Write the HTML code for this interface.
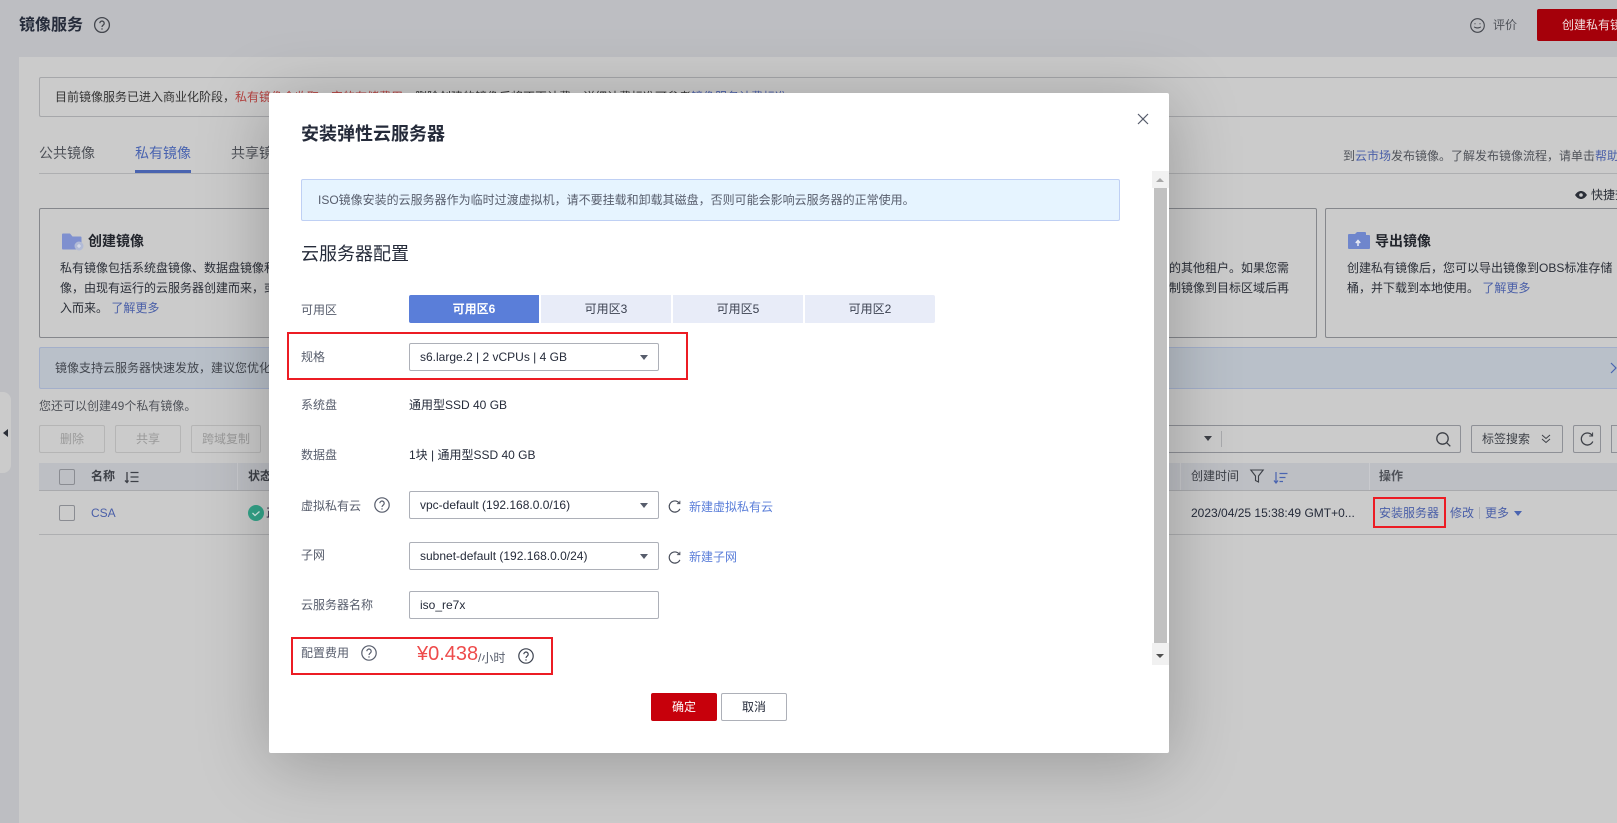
<!DOCTYPE html>
<html lang="zh">
<head>
<meta charset="utf-8">
<title>镜像服务</title>
<style>
html,body{margin:0;padding:0;width:1617px;height:823px;overflow:hidden;background:#bdbec2;}
body{position:relative;font-family:"Liberation Sans","Noto Sans CJK SC",sans-serif;font-size:12px;color:#2b2f38;filter:blur(.3px);}
.a{position:absolute;box-sizing:border-box;}
.t{position:absolute;white-space:nowrap;line-height:20px;height:20px;font-size:12px;}
.b{color:#4a5fa8;}
.g{color:#4f5259;}
svg{position:absolute;overflow:visible;}
.l{color:#575d6c;}
.v{color:#252b3a;}
.sel{position:absolute;box-sizing:border-box;left:409px;width:250px;height:28px;border:1px solid #adb0b8;border-radius:2px;background:#fff;}
.sel span{position:absolute;left:10px;top:3px;line-height:20px;white-space:nowrap;color:#252b3a;font-size:12px;}
.sel i{position:absolute;right:10px;top:11px;width:0;height:0;border-left:4px solid transparent;border-right:4px solid transparent;border-top:5px solid #575d6c;}
.az{position:absolute;top:295px;height:28px;width:130px;background:#e8ecf8;text-align:center;line-height:28px;color:#3b4150;font-size:12px;}
.bt{position:absolute;box-sizing:border-box;top:425px;height:28px;border:1px solid #b5b5b5;border-radius:2px;color:#9a9a9a;text-align:center;line-height:26px;}
.cb{position:absolute;box-sizing:border-box;left:59px;width:16px;height:16px;border:1px solid #8a8c92;border-radius:2px;}
.r{position:absolute;box-sizing:border-box;border:2px solid #ec1c24;}
</style>
</head>
<body>

<!-- page background -->
<div class="a" style="left:19px;top:57px;width:1598px;height:766px;background:#cbcbcb;"></div>
<div class="a" style="left:0;top:392px;width:11px;height:81px;background:#cbcbcb;border-radius:0 8px 8px 0;"></div>
<div class="a" style="left:3px;top:429px;width:0;height:0;border-top:4px solid transparent;border-bottom:4px solid transparent;border-right:5px solid #2b2f38;"></div>

<div class="t" style="left:19px;top:16px;font-size:16px;font-weight:bold;color:#252b3a;">镜像服务</div>
<svg style="left:94px;top:17px" width="16" height="16" viewBox="0 0 16 16" fill="none" stroke="#44474e" stroke-width="1.300"><circle cx="8" cy="8" r="7.400"/><path d="M5.800 6.200a2.200 2.200 0 1 1 3.400 1.900c-.8.500-1.200 1-1.200 1.900"/><path d="M8 11.300v1.300"/></svg>

<svg style="left:1470px;top:18px" width="15" height="15" viewBox="0 0 15 15" fill="none" stroke="#44474e" stroke-width="1.100"><circle cx="7.500" cy="7.500" r="6.800"/><path d="M4.300 8.800c.8 1.500 5.600 1.500 6.400 0"/><path d="M5 5.200v1.100M10 5.200v1.100"/></svg>
<div class="t g" style="left:1493px;top:15px;">评价</div>
<div class="a" style="left:1537px;top:9px;width:80px;height:32px;background:#a5000a;border-radius:2px 0 0 2px;overflow:hidden;"><div class="t" style="left:25px;top:6px;color:#f2dede;">创建私有镜像</div></div>

<!-- notice -->
<div class="a" style="left:39px;top:77px;width:1578px;height:40px;border:1px solid #a6a7aa;border-right:0;border-radius:2px 0 0 2px;"></div>
<div class="t" style="left:55px;top:87px;"><span style="color:#333">目前镜像服务已进入商业化阶段，</span><span style="color:#b5413f">私有镜像会收取一定的存储费用，</span><span style="color:#333">删除创建的镜像后将不再计费，详细计费标准可参考</span><span class="b">镜像服务计费标准</span></div>

<!-- tabs -->
<div class="t g" style="left:39px;top:143px;font-size:14px;">公共镜像</div>
<div class="t" style="left:135px;top:143px;font-size:14px;color:#4a64b0;">私有镜像</div>
<div class="t g" style="left:231px;top:143px;font-size:14px;">共享镜像</div>
<div class="a" style="left:39px;top:173px;width:1578px;height:1px;background:#aeafb1;"></div>
<div class="a" style="left:135px;top:170px;width:56px;height:3px;background:#4a64b0;"></div>
<div class="t g" style="left:1343px;top:146px;">到<span class="b">云市场</span>发布镜像。了解发布镜像流程，请单击<span class="b">帮助</span></div>

<svg style="left:1575px;top:191px" width="12" height="8" viewBox="0 0 12 8"><path d="M0 4C2 1 4 0 6 0s4 1 6 4c-2 3-4 4-6 4S2 7 0 4z" fill="#2b2f38"/><circle cx="6" cy="4" r="1.800" fill="#cbcbcb"/></svg>
<div class="t" style="left:1591px;top:185px;">快捷查看</div>

<!-- cards -->
<div class="a" style="left:39px;top:208px;width:1278px;height:130px;border:1px solid #85878c;border-radius:2px;"></div>
<div class="a" style="left:1325px;top:208px;width:292px;height:130px;border:1px solid #85878c;border-right:0;border-radius:2px 0 0 2px;"></div>
<svg style="left:62px;top:233px" width="22" height="18" viewBox="0 0 22 18"><path d="M0 1.500a1 1 0 0 1 1-1h7l2.500 3h8a1 1 0 0 1 1 1v11a1 1 0 0 1-1 1H1a1 1 0 0 1-1-1z" fill="#7f90cf"/><circle cx="17" cy="13" r="4.500" fill="#b2bbd6"/><path d="M17 11v4M15 13h4" stroke="#dfe3ee" stroke-width="1"/></svg>
<div class="t" style="left:88px;top:231px;font-size:14px;font-weight:bold;color:#22252c;">创建镜像</div>
<div class="t" style="left:60px;top:258px;">私有镜像包括系统盘镜像、数据盘镜像和整机镜像</div>
<div class="t" style="left:60px;top:278px;">像，由现有运行的云服务器创建而来，或从外部导</div>
<div class="t" style="left:60px;top:298px;">入而来。 <span class="b">了解更多</span></div>
<div class="t" style="left:1169px;top:258px;">的其他租户。如果您需</div>
<div class="t" style="left:1169px;top:278px;">制镜像到目标区域后再</div>
<svg style="left:1348px;top:232px" width="22" height="19" viewBox="0 0 22 19"><path d="M0 3a1 1 0 0 1 1-1h6l2-2h8a1 1 0 0 1 1 1v2h3a1 1 0 0 1 1 1v12a1 1 0 0 1-1 1H1a1 1 0 0 1-1-1z" fill="#6f86cc"/><path d="M10 14v-5M7.800 11L10 8.500 12.200 11" fill="none" stroke="#e8ebf5" stroke-width="1.500"/></svg>
<div class="t" style="left:1375px;top:231px;font-size:14px;font-weight:bold;color:#22252c;">导出镜像</div>
<div class="t" style="left:1347px;top:258px;">创建私有镜像后，您可以导出镜像到OBS标准存储</div>
<div class="t" style="left:1347px;top:278px;">桶，并下载到本地使用。 <span class="b">了解更多</span></div>

<!-- banner -->
<div class="a" style="left:39px;top:347px;width:1578px;height:42px;background:#b9c0c9;border:1px solid #a3afca;border-right:0;border-radius:2px 0 0 2px;"></div>
<div class="t" style="left:55px;top:358px;color:#41454d;">镜像支持云服务器快速发放，建议您优化镜像</div>
<svg style="left:1610px;top:362px" width="7" height="12" viewBox="0 0 7 12" fill="none" stroke="#4a64b0" stroke-width="1.200"><path d="M1 1l5 5-5 5"/></svg>

<div class="t g" style="left:39px;top:396px;">您还可以创建49个私有镜像。</div>

<div class="bt" style="left:39px;width:66px;">删除</div>
<div class="bt" style="left:115px;width:66px;">共享</div>
<div class="bt" style="left:191px;width:70px;">跨域复制</div>

<div class="a" style="left:1150px;top:425px;width:311px;height:28px;border:1px solid #8e9096;border-left:0;border-radius:0 2px 2px 0;"></div>
<div class="a" style="left:1204px;top:436px;width:0;height:0;border-left:4px solid transparent;border-right:4px solid transparent;border-top:5px solid #3d4047;"></div>
<div class="a" style="left:1221px;top:431px;width:1px;height:16px;background:#a9aaad;"></div>
<svg style="left:1436px;top:432px" width="15" height="15" viewBox="0 0 15 15" fill="none" stroke="#3d4047" stroke-width="1.300"><circle cx="6.500" cy="6.500" r="5.700"/><path d="M10.800 10.800l3.500 3.500"/></svg>
<div class="a" style="left:1471px;top:425px;width:92px;height:28px;border:1px solid #8e9096;border-radius:2px;"></div>
<div class="t" style="left:1482px;top:429px;color:#3d4047;">标签搜索</div>
<svg style="left:1541px;top:434px" width="10" height="10" viewBox="0 0 10 10" fill="none" stroke="#3d4047" stroke-width="1"><path d="M1 1l4 3.500L9 1M1 5l4 3.500L9 5"/></svg>
<div class="a" style="left:1573px;top:425px;width:28px;height:28px;border:1px solid #8e9096;border-radius:2px;"></div>
<svg style="left:1580px;top:432px" width="14" height="14" viewBox="0 0 14 14" fill="none" stroke="#3d4047" stroke-width="1.300"><path d="M12.200 3.500A6 6 0 1 0 12.800 9.500"/><path d="M12.600 .5v3.500H9.200" stroke-width="1"/></svg>
<div class="a" style="left:1611px;top:425px;width:6px;height:28px;border:1px solid #8e9096;border-right:0;"></div>

<!-- table -->
<div class="a" style="left:39px;top:463px;width:1578px;height:27px;background:#bdbfc4;"></div>
<div class="a" style="left:39px;top:490px;width:1578px;height:1px;background:#a9aaad;"></div>
<div class="a" style="left:237px;top:463px;width:1px;height:27px;background:#c9cace;"></div>
<div class="a" style="left:1180px;top:463px;width:1px;height:27px;background:#c9cace;"></div>
<div class="a" style="left:1369px;top:463px;width:1px;height:27px;background:#c9cace;"></div>
<div class="cb" style="top:469px;"></div>
<div class="t" style="left:91px;top:466px;font-weight:bold;color:#3d4047;">名称</div>
<svg style="left:124px;top:471px" width="15" height="13" viewBox="0 0 15 13" fill="none" stroke="#3d4047" stroke-width="1.300"><path d="M3 1v10M1 9.500L3 11.500 4.500 9.500"/><path d="M6.500 1.500h8M6.500 6h8M6.500 10.500h8"/></svg>
<div class="t" style="left:248px;top:466px;font-weight:bold;color:#3d4047;">状态</div>
<div class="t" style="left:1191px;top:466px;color:#3d4047;">创建时间</div>
<svg style="left:1250px;top:469px" width="14" height="14" viewBox="0 0 14 14" fill="none" stroke="#3d4047" stroke-width="1.100"><path d="M.8 1h12.400L8.500 7v6L5.500 11.500V7z"/></svg>
<svg style="left:1273px;top:472px" width="15" height="12" viewBox="0 0 15 12" fill="none" stroke="#4a64b0" stroke-width="1.200"><path d="M3 0v10.500M1 8.500L3 11 5 8.500"/><path d="M6.500 1.500h8M6.500 5.500h6M6.500 9.500h3.500"/></svg>
<div class="t" style="left:1379px;top:466px;font-weight:bold;color:#4f5259;">操作</div>

<div class="cb" style="top:505px;"></div>
<div class="t b" style="left:91px;top:503px;">CSA</div>
<svg style="left:248px;top:505px" width="16" height="16" viewBox="0 0 16 16"><circle cx="8" cy="8" r="8" fill="#34a58a"/><path d="M4.500 8l2.500 2.500 4.500-4" fill="none" stroke="#d5eee8" stroke-width="1.300"/></svg>
<div class="t" style="left:266px;top:503px;color:#2b1a3a;">正常</div>
<div class="t" style="left:1191px;top:503px;color:#252b3a;">2023/04/25 15:38:49 GMT+0...</div>
<div class="t b" style="left:1379px;top:503px;">安装服务器</div>
<div class="t b" style="left:1450px;top:503px;">修改</div>
<div class="a" style="left:1479px;top:507px;width:1px;height:12px;background:#aeafb3;"></div>
<div class="t b" style="left:1485px;top:503px;">更多</div>
<div class="a" style="left:1514px;top:511px;width:0;height:0;border-left:4px solid transparent;border-right:4px solid transparent;border-top:5px solid #4a64b0;"></div>
<div class="a" style="left:39px;top:534px;width:1578px;height:1px;background:#aeafb1;"></div>
<div class="r" style="left:1373px;top:497px;width:73px;height:31px;"></div>

<!-- modal -->
<div class="a" style="left:269px;top:93px;width:900px;height:660px;background:#fff;border-radius:2px;box-shadow:0 10px 70px rgba(0,0,0,.25);"></div>
<div class="t" style="left:301px;top:124px;font-weight:bold;color:#252b3a;font-size:18px;">安装弹性云服务器</div>
<svg style="left:1137px;top:113px" width="12" height="12" viewBox="0 0 12 12" fill="none" stroke="#575d6c" stroke-width="1.200"><path d="M1 1l10 10M11 1L1 11"/></svg>

<div class="a" style="left:301px;top:179px;width:819px;height:42px;background:#e6f4ff;border:1px solid #bfd0f4;border-radius:2px;"></div>
<div class="t" style="left:318px;top:190px;color:#575d6c;">ISO镜像安装的云服务器作为临时过渡虚拟机，请不要挂载和卸载其磁盘，否则可能会影响云服务器的正常使用。</div>
<div class="t" style="left:301px;top:244px;font-size:18px;color:#252b3a;">云服务器配置</div>

<div class="t l" style="left:301px;top:300px;">可用区</div>
<div class="az" style="left:409px;background:#5a7ed9;color:#fff;font-weight:bold;border-radius:2px 0 0 2px;">可用区6</div>
<div class="az" style="left:541px;">可用区3</div>
<div class="az" style="left:673px;">可用区5</div>
<div class="az" style="left:805px;border-radius:0 2px 2px 0;">可用区2</div>

<div class="t l" style="left:301px;top:347px;">规格</div>
<div class="sel" style="top:343px;"><span>s6.large.2 | 2 vCPUs | 4 GB</span><i></i></div>
<div class="r" style="left:287px;top:332px;width:401px;height:48px;"></div>

<div class="t l" style="left:301px;top:395px;">系统盘</div>
<div class="t v" style="left:409px;top:395px;">通用型SSD 40 GB</div>
<div class="t l" style="left:301px;top:445px;">数据盘</div>
<div class="t v" style="left:409px;top:445px;">1块 | 通用型SSD 40 GB</div>

<div class="t l" style="left:301px;top:496px;">虚拟私有云</div>
<svg style="left:374px;top:497px" width="16" height="16" viewBox="0 0 16 16" fill="none" stroke="#575d6c" stroke-width="1.200"><circle cx="8" cy="8" r="7.200"/><path d="M5.800 6.200a2.200 2.200 0 1 1 3.400 1.900c-.8.500-1.200 1-1.200 1.900"/><path d="M8 11.300v1.300"/></svg>
<div class="sel" style="top:491px;"><span>vpc-default (192.168.0.0/16)</span><i></i></div>
<svg style="left:668px;top:500px" width="13" height="13" viewBox="0 0 14 14" fill="none" stroke="#4a4f5c" stroke-width="1.300"><path d="M12.200 3.500A6 6 0 1 0 12.800 9.500"/><path d="M12.800 .8v3.200H9.600" stroke-width="1"/></svg>
<div class="t" style="left:689px;top:497px;color:#5a7ed9;">新建虚拟私有云</div>

<div class="t l" style="left:301px;top:545px;">子网</div>
<div class="sel" style="top:542px;"><span>subnet-default (192.168.0.0/24)</span><i></i></div>
<svg style="left:668px;top:551px" width="13" height="13" viewBox="0 0 14 14" fill="none" stroke="#4a4f5c" stroke-width="1.300"><path d="M12.200 3.500A6 6 0 1 0 12.800 9.500"/><path d="M12.800 .8v3.200H9.600" stroke-width="1"/></svg>
<div class="t" style="left:689px;top:547px;color:#5a7ed9;">新建子网</div>

<div class="t l" style="left:301px;top:595px;">云服务器名称</div>
<div class="a" style="left:409px;top:591px;width:250px;height:28px;border:1px solid #adb0b8;border-radius:2px;"></div>
<div class="t v" style="left:420px;top:595px;">iso_re7x</div>

<div class="t l" style="left:301px;top:643px;">配置费用</div>
<svg style="left:361px;top:645px" width="16" height="16" viewBox="0 0 16 16" fill="none" stroke="#575d6c" stroke-width="1.200"><circle cx="8" cy="8" r="7.200"/><path d="M5.800 6.200a2.200 2.200 0 1 1 3.400 1.900c-.8.500-1.200 1-1.200 1.900"/><path d="M8 11.300v1.300"/></svg>
<div class="t" style="left:417px;top:644px;font-size:20px;color:#ee4b4b;">¥0.438</div>
<div class="t l" style="left:478px;top:648px;">/小时</div>
<svg style="left:518px;top:648px" width="16" height="16" viewBox="0 0 16 16" fill="none" stroke="#3d4350" stroke-width="1.200"><circle cx="8" cy="8" r="7.200"/><path d="M5.800 6.200a2.200 2.200 0 1 1 3.400 1.900c-.8.500-1.200 1-1.200 1.900"/><path d="M8 11.300v1.300"/></svg>
<div class="r" style="left:291px;top:637px;width:262px;height:38px;"></div>

<!-- scrollbar -->
<div class="a" style="left:1152px;top:171px;width:17px;height:17px;background:#f1f1f1;"></div>
<div class="a" style="left:1152px;top:643px;width:17px;height:22px;background:#f1f1f1;"></div>
<div class="a" style="left:1154px;top:188px;width:13px;height:455px;background:#c1c1c1;"></div>
<div class="a" style="left:1156px;top:178px;width:0;height:0;border-left:4px solid transparent;border-right:4px solid transparent;border-bottom:4px solid #a8a8a8;"></div>
<div class="a" style="left:1156px;top:654px;width:0;height:0;border-left:4px solid transparent;border-right:4px solid transparent;border-top:4px solid #505050;"></div>

<!-- buttons -->
<div class="a" style="left:651px;top:693px;width:66px;height:28px;background:#c7000b;border-radius:2px;color:#fff;text-align:center;line-height:28px;">确定</div>
<div class="a" style="left:721px;top:693px;width:66px;height:28px;border:1px solid #adb0b8;border-radius:2px;color:#252b3a;text-align:center;line-height:26px;">取消</div>

</body>
</html>
